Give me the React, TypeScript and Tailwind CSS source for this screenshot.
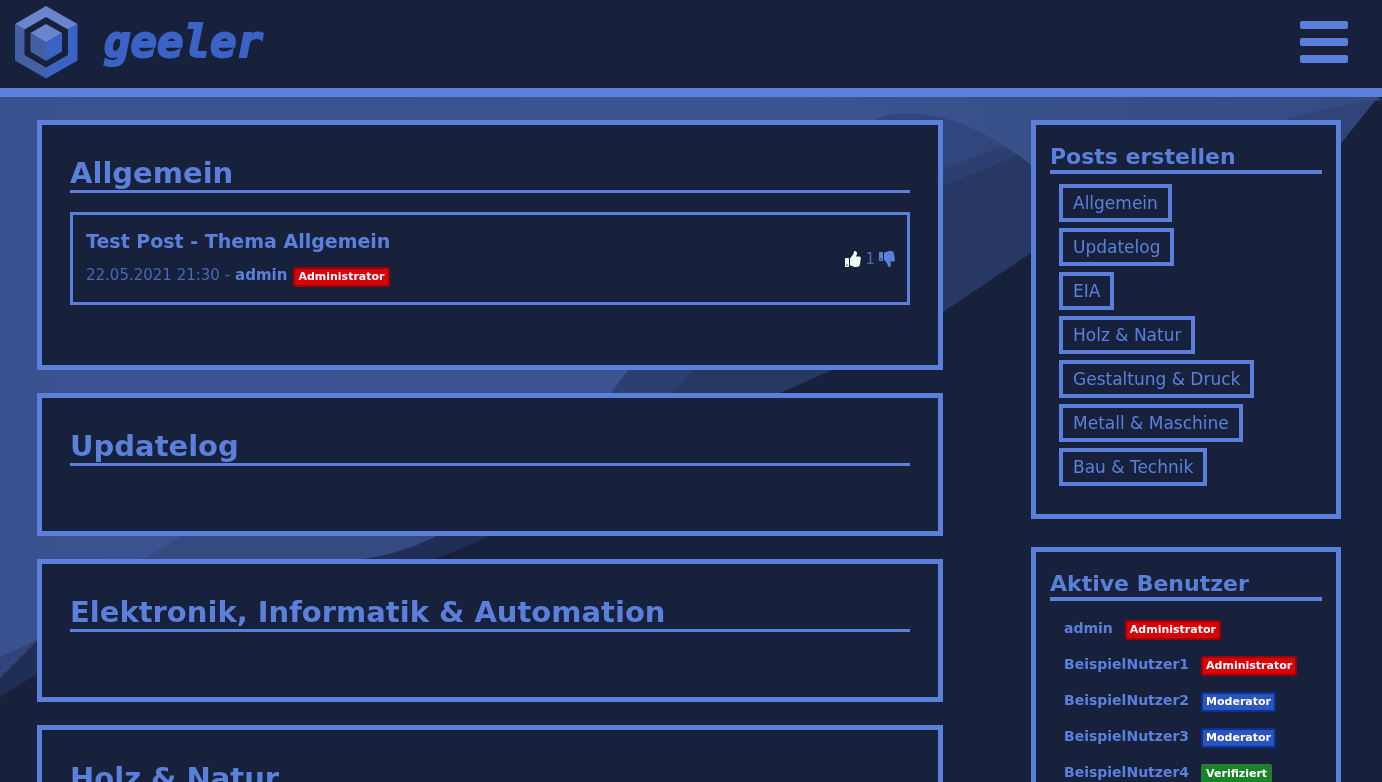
import { FaThumbsDown, FaThumbsUp } from "react-icons/fa";

type Role = "Administrator" | "Moderator" | "Verifiziert";

type Post = { title: string; date: string; author: string; role: Role; likes: number };

const topics: { title: string; posts: Post[] }[] = [
  {
    title: "Allgemein",
    posts: [
      {
        title: "Test Post - Thema Allgemein",
        date: "22.05.2021 21:30",
        author: "admin",
        role: "Administrator",
        likes: 1,
      },
    ],
  },
  { title: "Updatelog", posts: [] },
  { title: "Elektronik, Informatik & Automation", posts: [] },
  { title: "Holz & Natur", posts: [] },
];

const categories = [
  "Allgemein",
  "Updatelog",
  "EIA",
  "Holz & Natur",
  "Gestaltung & Druck",
  "Metall & Maschine",
  "Bau & Technik",
];

const users: { name: string; role: Role }[] = [
  { name: "admin", role: "Administrator" },
  { name: "BeispielNutzer1", role: "Administrator" },
  { name: "BeispielNutzer2", role: "Moderator" },
  { name: "BeispielNutzer3", role: "Moderator" },
  { name: "BeispielNutzer4", role: "Verifiziert" },
];

const roleStyles: Record<Role, string> = {
  Administrator: "bg-[#d90209] border-[#9b0208]",
  Moderator: "bg-[#2b55bd] border-[#0b3195]",
  Verifiziert: "bg-[#178429] border-[#2a7a2f]",
};

function RoleBadge({ role }: { role: Role }) {
  return (
    <span
      className={`mt-[3px] inline-block rounded-[2px] border-2 px-[3px] text-[11px] leading-4 font-bold text-white ${roleStyles[role]}`}
    >
      {role}
    </span>
  );
}

function Logo() {
  return (
    <svg viewBox="0 0 64 74" className="h-[74px] w-16" aria-hidden="true">
      <path fill="#6a85cd" d="M1 19 32 1l31.500 18-9.500 5.500L32 12 10.500 24.500z" />
      <path fill="#4460a3" d="M1 19l9.500 5.500v25.500L32 62.500V73.500L1 55.500z" />
      <path fill="#3b63c6" d="M63.500 19 54 24.500V50L32 62.500V73.500l31.500-18z" />
      <path fill="#6a85cd" d="M32 19l16 9-16 9.500L16.500 28z" />
      <path fill="#4460a3" d="M16.500 28 32 37.500V56L16.500 46.500z" />
      <path fill="#3b63c6" d="M48 28 32 37.500V56l16-9.500z" />
    </svg>
  );
}

function Waves() {
  return (
    <svg
      viewBox="0 0 1382 782"
      preserveAspectRatio="xMidYMid slice"
      className="fixed inset-0 -z-10 h-full w-full"
      aria-hidden="true"
    >
      <defs>
        <linearGradient id="wave" x1="0" x2="1" y1="0" y2="0">
          <stop offset="0" stopColor="#3a528f" />
          <stop offset="0.600" stopColor="#3b538f" />
          <stop offset="1" stopColor="#354b82" />
        </linearGradient>
      </defs>
      <path fill="#202e55" d="M0 440H600L487 537Q460 550 432 560L37 674 0 697z" />
      <path fill="#273862" d="M0 97H1031V253L943 312Q890 345 832 370L780 393 700 440H0z" />
      <path fill="#2d3f71" d="M0 97H1031V150L943 186Q800 245 693 370L673 393 640 440H0z" />
      <path fill="#31467c" d="M0 97H1031V135L943 169Q800 230 720 300L0 360z" />
      <path fill="#30447a" d="M0 500H470L435 537Q395 556 355 560L37 641 0 678z" />
      <path fill="#344a81" d="M120 500H470L435 537Q395 556 355 560L100 600z" />
      <path
        fill="url(#wave)"
        d="M0 97H1378L1341 143 1100 220 1031 165Q1018 154 1003 145 980 130 957 122 930 113 900 113 800 125 628 370L611 393 500 460 180 537 142 560 37 640 0 657z"
      />
      <path fill="#30447a" d="M1378 97L1382 100Q1330 105 1286 120L1240 150H1335L1341 143z" />
    </svg>
  );
}

function PostCard({ post }: { post: Post }) {
  return (
    <article className="mt-[19px] flex items-center justify-between border-[3px] border-[#5b80dc] pt-3 pr-3 pb-[11px] pl-[13px]">
      <div>
        <h3 className="text-[19px] leading-7 font-bold">{post.title}</h3>
        <p className="mt-1 flex h-8 items-center text-[15px]">
          <span className="text-[#4a68b8]">{post.date} -</span>
          <a href="#admin" className="mr-[6px] ml-[5px] font-bold">
            {post.author}
          </a>
          <RoleBadge role={post.role} />
        </p>
      </div>
      <div className="flex items-center gap-1 text-[15px] text-[#4a68b8]">
        <button type="button" aria-label="Gefällt mir" className="text-[#f0fff0]">
          <FaThumbsUp size={16} />
        </button>
        <span>{post.likes}</span>
        <button type="button" aria-label="Gefällt mir nicht" className="text-[#5b80dc]">
          <FaThumbsDown size={16} />
        </button>
      </div>
    </article>
  );
}

export default function App() {
  return (
    <div className="relative isolate min-h-screen bg-[#17213c] font-['DejaVu_Sans',Verdana,sans-serif] text-[#5b80dc]">
      <Waves />
      <header className="flex h-[97px] items-center justify-between border-b-[9px] border-[#5b80dc] bg-[#17213c] pr-[34px] pb-1 pl-[14px]">
        <a href="#start" className="flex items-center gap-[26px]">
          <Logo />
          <span className="font-['DejaVu_Sans_Mono',monospace] text-[44px] leading-none font-bold text-[#3b63c6] italic [-webkit-text-stroke:2px_#3b63c6]">
            geeler
          </span>
        </a>
        <button type="button" aria-label="Menü" className="flex w-12 flex-col gap-[9px]">
          <span className="h-2 rounded-[2px] bg-[#5b80dc]" />
          <span className="h-2 rounded-[2px] bg-[#5b80dc]" />
          <span className="h-2 rounded-[2px] bg-[#5b80dc]" />
        </button>
      </header>

      <div className="flex items-start gap-[88px] pt-[23px] pr-[41px] pb-6 pl-[37px]">
        <main className="flex min-w-0 flex-1 flex-col gap-[23px]">
          {topics.map((topic) => (
            <section
              key={topic.title}
              className={`border-[5px] border-[#5b80dc] bg-[#17213c] px-7 pt-[31px] ${
                topic.posts.length > 0 ? "pb-[60px]" : "pb-[65px]"
              }`}
            >
              <h2 className="border-b-[3px] border-[#5b80dc] text-[29px] leading-[34px] font-bold">
                {topic.title}
              </h2>
              {topic.posts.map((post) => (
                <PostCard key={post.title} post={post} />
              ))}
            </section>
          ))}
        </main>

        <aside className="flex w-[310px] shrink-0 flex-col gap-7">
          <section className="border-[5px] border-[#5b80dc] bg-[#17213c] px-[14px] pt-[19px] pb-7">
            <h2 className="border-b-4 border-[#5b80dc] text-[22px] leading-[26px] font-bold">
              Posts erstellen
            </h2>
            <div className="mt-[10px] flex flex-col items-start gap-[6px] pl-[9px]">
              {categories.map((name) => (
                <button
                  key={name}
                  type="button"
                  className="border-4 border-[#5b80dc] px-[10px] text-[17px] leading-[30px]"
                >
                  {name}
                </button>
              ))}
            </div>
          </section>

          <section className="border-[5px] border-[#5b80dc] bg-[#17213c] px-[14px] pt-[19px] pb-7">
            <h2 className="border-b-4 border-[#5b80dc] text-[22px] leading-[26px] font-bold">
              Aktive Benutzer
            </h2>
            <ul className="mt-[9px] pl-[14px]">
              {users.map((user) => (
                <li key={user.name} className="flex h-9 items-center gap-3 text-[14px]">
                  <a href={`#${user.name}`} className="font-bold">
                    {user.name}
                  </a>
                  <RoleBadge role={user.role} />
                </li>
              ))}
            </ul>
          </section>
        </aside>
      </div>
    </div>
  );
}
